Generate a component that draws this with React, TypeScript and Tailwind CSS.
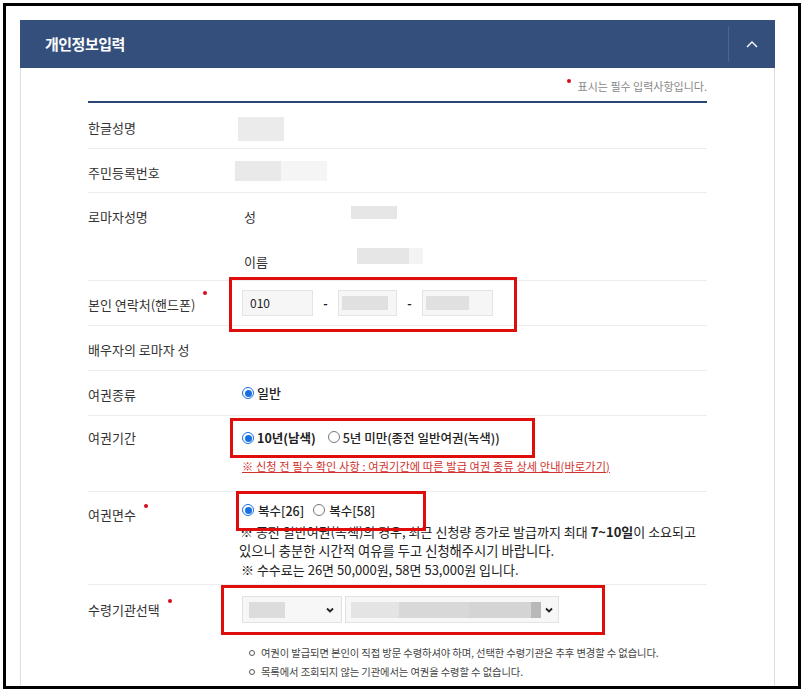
import React from 'react';

const font = { fontFamily: '"Noto Sans CJK KR", "Noto Sans", sans-serif' };

const Dot = () => (
  <span className="relative -top-[12px] ml-[8px] inline-block w-[4px] h-[4px] rounded-full bg-[#d80c18]" />
);

const Radio = ({ on }: { on?: boolean }) =>
  on ? (
    <span className="inline-flex w-[12px] h-[12px] rounded-full border border-[#1a6fe0] items-center justify-center bg-white">
      <span className="w-[7px] h-[7px] rounded-full bg-[#1a6fe0]" />
    </span>
  ) : (
    <span className="inline-block w-[12px] h-[12px] rounded-full border border-[#777] bg-white" />
  );

const Row = ({ h, label, dot, children, last }: { h: string; label?: string; dot?: boolean; children?: React.ReactNode; last?: boolean }) => (
  <div className={`flex ${h} ${last ? '' : 'border-b border-[#ececec]'}`}>
    <div className="w-[147px] shrink-0 flex items-center pt-[4px] text-[13px] text-[#333]">
      {label}
      {dot && <Dot />}
    </div>
    <div className="flex-1">{children}</div>
  </div>
);

const Chevron = () => (
  <svg width="12" height="8" viewBox="0 0 12 8" fill="none" stroke="white" strokeWidth="1.4">
    <path d="M1 7 L6 2 L11 7" />
  </svg>
);

const SelectArrow = () => (
  <svg width="8" height="6" viewBox="0 0 8 6" fill="none" stroke="#222" strokeWidth="1.8">
    <path d="M1 1.5 L4 4.5 L7 1.5" />
  </svg>
);

export default function App() {
  return (
    <div className="relative w-[803px] h-[692px] bg-white p-[3px]" style={font}>
      <div className="w-[798px] h-[686px] border-[3px] border-black overflow-hidden pl-[14px] pt-[14px]">
        <div className="w-[755px]">
          {/* header */}
          <div className="h-[48px] bg-[#344f7c] flex items-center">
            <div className="flex-1 pl-[25px] text-white text-[15px] font-bold tracking-[-0.5px]">개인정보입력</div>
            <div className="w-[47px] h-[36px] border-l border-[#4a6391] flex items-center justify-center">
              <Chevron />
            </div>
          </div>

          {/* body */}
          <div className="border-x border-[#dedede] h-[640px] px-[67px]">
            <div className="h-[33px] flex items-center justify-end pt-[4px] text-[11px] text-[#888]">
              <span className="relative -top-[6px] mr-[7px] w-[4px] h-[4px] rounded-full bg-[#d80c18]" />
              표시는 필수 입력사항입니다.
            </div>
            <div className="h-[2px] bg-[#2b4670]" />

            <Row h="h-[46px]" label="한글성명">
              <div className="h-full flex items-center pt-[6px]">
                <div className="ml-[3px] w-[46px] h-[24px] bg-[#ebebeb]" />
              </div>
            </Row>

            <Row h="h-[44px]" label="주민등록번호">
              <div className="h-full flex items-start pt-[12px]">
                <div className="w-[46px] h-[20px] bg-[#e9e9e9]" />
                <div className="w-[46px] h-[20px] bg-[#f5f5f5]" />
              </div>
            </Row>

            <div className="flex h-[88px] border-b border-[#ececec]">
              <div className="w-[147px] shrink-0 h-[44px] flex items-center pt-[4px] text-[13px] text-[#333]">로마자성명</div>
              <div className="flex-1 flex flex-col">
                <div className="h-[44px] flex items-center pt-[4px] text-[13px] text-[#333]">
                  <span className="ml-[9px] w-[107px]">성</span>
                  <div className="w-[46px] h-[13px] bg-[#e6e6e6] -mt-[8px]" />
                </div>
                <div className="h-[44px] flex items-center text-[13px] text-[#333]">
                  <span className="ml-[9px] w-[113px] pt-[6px]">이름</span>
                  <div className="flex -mt-[4px]">
                    <div className="w-[52px] h-[16px] bg-[#e6e6e6]" />
                    <div className="w-[14px] h-[16px] bg-[#f4f4f4]" />
                  </div>
                </div>
              </div>
            </div>

            <Row h="h-[45px]" label="본인 연락처(핸드폰)" dot>
              <div className="h-full flex items-center pl-[7px] text-[12px] text-[#222]">
                <div className="w-[71px] h-[26px] bg-[#f6f6f6] border border-[#e4e4e4] flex items-center pl-[7px]">010</div>
                <span className="w-[25px] text-center font-bold">-</span>
                <div className="w-[59px] h-[26px] bg-[#f6f6f6] border border-[#e4e4e4] flex items-center pl-[3px]">
                  <div className="w-[46px] h-[14px] bg-[#e0e0e0]" />
                </div>
                <span className="w-[25px] text-center font-bold">-</span>
                <div className="w-[71px] h-[26px] bg-[#f6f6f6] border border-[#e4e4e4] flex items-center pl-[3px]">
                  <div className="w-[43px] h-[14px] bg-[#e0e0e0]" />
                </div>
              </div>
            </Row>

            <Row h="h-[45px]" label="배우자의 로마자 성" />

            <Row h="h-[45px]" label="여권종류">
              <div className="h-full flex items-center pl-[7px] gap-[3px] text-[13px] text-[#222]">
                <Radio on />
                <span className="font-medium">일반</span>
              </div>
            </Row>

            <div className="flex h-[76px] border-b border-[#ececec]">
              <div className="w-[147px] shrink-0 pt-[12px] text-[13px] text-[#333]">여권기간</div>
              <div className="flex-1 pl-[7px]">
                <div className="h-[42px] flex items-center text-[12.5px] text-[#222] pt-[2px]">
                  <Radio on />
                  <span className="ml-[3px] font-bold">10년(남색)</span>
                  <span className="ml-[12px]"><Radio /></span>
                  <span className="ml-[3px] font-medium">5년 미만(종전 일반여권(녹색))</span>
                </div>
                <div className="text-[11.2px] text-[#d0322e] underline tracking-[0.1px]">
                  ※ 신청 전 필수 확인 사항 : 여권기간에 따른 발급 여권 종류 상세 안내(바로가기)
                </div>
              </div>
            </div>

            <div className="flex h-[93px] border-b border-[#ececec]">
              <div className="w-[147px] shrink-0 pt-[13px] text-[13px] text-[#333]">
                여권면수
                <Dot />
              </div>
              <div className="flex-1 text-[13px] text-[#222] leading-[19px]">
                <div className="h-[30px] flex items-center pl-[7px] pt-[6px] text-[12.5px]">
                  <Radio on />
                  <span className="ml-[4px] font-medium">복수[26]</span>
                  <span className="ml-[9px]"><Radio /></span>
                  <span className="ml-[4px] font-medium">복수[58]</span>
                </div>
                <div className="pl-[5px]">
                  ※ 종전 일반여권(녹색)의 경우, 최근 신청량 증가로 발급까지 최대 <b>7~10일</b>이 소요되고
                </div>
                <div className="pl-[4px] text-[13.3px]">있으니 충분한 시간적 여유를 두고 신청해주시기 바랍니다.</div>
                <div className="pl-[6px]">※ 수수료는 26면 50,000원, 58면 53,000원 입니다.</div>
              </div>
            </div>

            <div className="flex">
              <div className="w-[147px] shrink-0 pt-[15px] text-[13px] text-[#333]">
                수령기관선택
                <Dot />
              </div>
              <div className="flex-1 pl-[7px] pt-[11px]">
                <div className="flex gap-[3px]">
                  <div className="w-[100px] h-[27px] bg-[#f7f7f7] border border-[#e2e2e2] flex items-center pl-[6px] pr-[7px] justify-between">
                    <div className="w-[36px] h-[16px] bg-[#dcdcdc]" />
                    <SelectArrow />
                  </div>
                  <div className="w-[214px] h-[27px] bg-[#f7f7f7] border border-[#e2e2e2] flex items-center pl-[5px] pr-[5px] justify-between">
                    <div className="flex h-[16px]">
                      <div className="w-[48px] bg-[#e4e4e4]" />
                      <div className="w-[70px] bg-[#d8d8d8]" />
                      <div className="w-[62px] bg-[#d4d4d4]" />
                      <div className="w-[10px] bg-[#b8b8b8]" />
                    </div>
                    <SelectArrow />
                  </div>
                </div>
                <div className="mt-[20px] pl-[7px] text-[10.3px] text-[#444] leading-[19px] tracking-[-0.1px]">
                  <div className="flex items-center gap-[6px]">
                    <span className="w-[6px] h-[6px] rounded-full border border-[#555]" />
                    여권이 발급되면 본인이 직접 방문 수령하셔야 하며, 선택한 수령기관은 추후 변경할 수 없습니다.
                  </div>
                  <div className="flex items-center gap-[6px]">
                    <span className="w-[6px] h-[6px] rounded-full border border-[#555]" />
                    목록에서 조회되지 않는 기관에서는 여권을 수령할 수 없습니다.
                  </div>
                </div>
              </div>
            </div>
          </div>
        </div>
      </div>

      {/* red annotation boxes */}
      <div className="absolute left-[229px] top-[277px] w-[288px] h-[55px] border-[3px] border-[#e00d0d]" />
      <div className="absolute left-[230px] top-[418px] w-[305px] h-[40px] border-[3px] border-[#e00d0d]" />
      <div className="absolute left-[236px] top-[491px] w-[190px] h-[40px] border-[3px] border-[#e00d0d]" />
      <div className="absolute left-[221px] top-[585px] w-[384px] h-[50px] border-[3px] border-[#e00d0d]" />
    </div>
  );
}
